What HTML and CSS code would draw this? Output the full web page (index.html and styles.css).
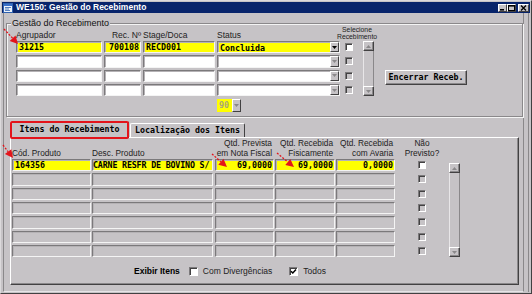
FILE: index.html
```html
<!DOCTYPE html>
<html lang="pt">
<head>
<meta charset="utf-8">
<title>WE150: Gestão do Recebimento</title>
<link rel="stylesheet" href="styles.css">
</head>
<body>
<div class="win">
  <div class="titlebar">
    <svg class="ticon" width="10" height="10" viewBox="0 0 10 10">
      <rect x="0.5" y="0.5" width="9" height="9" fill="#eef3fb" stroke="#2f62b0"/>
      <rect x="1" y="1" width="8" height="2" fill="#3a70c8"/>
      <path d="M2 4.5h6M2 6h4M2 7.5h5" stroke="#2f62b0" stroke-width="0.8"/>
    </svg>
    <span class="ttext">WE150: Gestão do Recebimento</span>
    <span class="tbtns">
      <span class="tbtn"><svg width="7" height="6" viewBox="0 0 7 6"><rect x="1" y="4" width="4" height="1.6" fill="#000"/></svg></span>
      <span class="tbtn"><svg width="7" height="6" viewBox="0 0 7 6"><rect x="0.5" y="0.5" width="6" height="5" fill="none" stroke="#000"/><rect x="0" y="0" width="7" height="1.6" fill="#000"/></svg></span>
      <span class="tbtn close"><svg width="7" height="6" viewBox="0 0 7 6"><path d="M1 0.5L6 5.5M6 0.5L1 5.5" stroke="#000" stroke-width="1.4"/></svg></span>
    </span>
  </div>
  <div class="client">
    <div class="canvas">
      <div class="group">
        <span class="legend">Gestão do Recebimento</span>
        <div class="ggrid">
          <span class="lb c1 r0">Agrupador</span>
          <span class="lb c2 r0 rt w37">Rec. Nº</span>
          <span class="lb c3 r0">Stage/Doca</span>
          <span class="lb c4 r0">Status</span>
          <span class="lb sm sel r0">Selecione<br>Recebimento</span>

          <div class="f y c1 r1 w86">31215</div>
          <div class="f y c2 r1 w37 rt">700108</div>
          <div class="f y c3 r1 w72">RECD001</div>
          <div class="f y c4 r1 w123 cmb"><span class="tx">Concluida</span><span class="dd"><svg width="5" height="3" viewBox="0 0 5 3"><path d="M0 0h5L2.5 3z" fill="#000"/></svg></span></div>
          <span class="cb c5 r1 on"></span>

          <div class="f c1 r2 w86"></div>
          <div class="f c2 r2 w37"></div>
          <div class="f c3 r2 w72"></div>
          <div class="f c4 r2 w123 cmb"><span class="tx"></span><span class="dd"><svg width="5" height="3" viewBox="0 0 5 3"><path d="M0 0h5L2.5 3z" fill="#8a888a"/></svg></span></div>
          <span class="cb c5 r2"></span>

          <div class="f c1 r3 w86"></div>
          <div class="f c2 r3 w37"></div>
          <div class="f c3 r3 w72"></div>
          <div class="f c4 r3 w123 cmb"><span class="tx"></span><span class="dd"><svg width="5" height="3" viewBox="0 0 5 3"><path d="M0 0h5L2.5 3z" fill="#8a888a"/></svg></span></div>
          <span class="cb c5 r3"></span>

          <div class="f c1 r4 w86"></div>
          <div class="f c2 r4 w37"></div>
          <div class="f c3 r4 w72"></div>
          <div class="f c4 r4 w123 cmb"><span class="tx"></span><span class="dd"><svg width="5" height="3" viewBox="0 0 5 3"><path d="M0 0h5L2.5 3z" fill="#8a888a"/></svg></span></div>
          <span class="cb c5 r4"></span>

          <div class="sb sbu">
            <span class="sbb"><svg width="5" height="3" viewBox="0 0 5 3"><path d="M0 3h5L2.5 0z" fill="#8a888a"/></svg></span>
            <span class="sbt"></span>
            <span class="sbb"><svg width="5" height="3" viewBox="0 0 5 3"><path d="M0 0h5L2.5 3z" fill="#8a888a"/></svg></span>
          </div>

          <button class="btn" type="button">Encerrar Receb.</button>

          <div class="combo90"><span class="v">90</span><span class="dd dis"><svg width="5" height="3" viewBox="0 0 5 3"><path d="M0 0h5L2.5 3z" fill="#8a888a"/></svg></span></div>
        </div>
      </div>

      <div class="tabctl">
        <div class="tabstrip">
          <div class="tab act">Itens do Recebimento</div>
          <div class="tab">Localização dos Itens</div>
        </div>
        <div class="panel">
          <div class="lgrid">
            <span class="lh k1">Cód. Produto</span>
            <span class="lh k2">Desc. Produto</span>
            <span class="lh k3 rt">Qtd. Prevista<br>em Nota Fiscal</span>
            <span class="lh k4 rt">Qtd. Recebida<br>Fisicamente</span>
            <span class="lh k5 rt">Qtd. Recebida<br>com Avaria</span>
            <span class="lh k6 ct">Não<br>Previsto?</span>

            <div class="f y k1 w79">164356</div>
            <div class="f y k2 w121 tight">CARNE RESFR DE BOVINO S/</div>
            <div class="f y k3 w59 rt">69,0000</div>
            <div class="f y k4 w60 rt">69,0000</div>
            <div class="f y k5 w59 rt">0,0000</div>
            <span class="cb k6 on mid"></span>

            <div class="f g k1 w79"></div><div class="f g k2 w121"></div><div class="f g k3 w59"></div><div class="f g k4 w60"></div><div class="f g k5 w59"></div><span class="cb k6 mid"></span>
            <div class="f g k1 w79"></div><div class="f g k2 w121"></div><div class="f g k3 w59"></div><div class="f g k4 w60"></div><div class="f g k5 w59"></div><span class="cb k6 mid"></span>
            <div class="f g k1 w79"></div><div class="f g k2 w121"></div><div class="f g k3 w59"></div><div class="f g k4 w60"></div><div class="f g k5 w59"></div><span class="cb k6 mid"></span>
            <div class="f g k1 w79"></div><div class="f g k2 w121"></div><div class="f g k3 w59"></div><div class="f g k4 w60"></div><div class="f g k5 w59"></div><span class="cb k6 mid"></span>
            <div class="f g k1 w79"></div><div class="f g k2 w121"></div><div class="f g k3 w59"></div><div class="f g k4 w60"></div><div class="f g k5 w59"></div><span class="cb k6 mid"></span>
            <div class="f g k1 w79"></div><div class="f g k2 w121"></div><div class="f g k3 w59"></div><div class="f g k4 w60"></div><div class="f g k5 w59"></div><span class="cb k6 mid"></span>

            <div class="sb sbl">
              <span class="sbb"><svg width="5" height="3" viewBox="0 0 5 3"><path d="M0 3h5L2.5 0z" fill="#8a888a"/></svg></span>
              <span class="sbt"></span>
              <span class="sbb"><svg width="5" height="3" viewBox="0 0 5 3"><path d="M0 0h5L2.5 3z" fill="#8a888a"/></svg></span>
            </div>
          </div>
          <div class="filter">
            <span class="fl">Exibir Itens</span>
            <span class="cb9"></span>
            <span class="ft">Com Divergências</span>
            <span class="cb9 chk"><svg width="7" height="7" viewBox="0 0 7 7"><path d="M1 3.2L2.8 5 6 1.5" fill="none" stroke="#000" stroke-width="1.5"/></svg></span>
            <span class="ft">Todos</span>
          </div>
        </div>
      </div>
    </div>
    <div class="rstrip"></div>
  </div>
</div>

<div class="hl"></div>
<svg class="annot" width="532" height="294" viewBox="0 0 532 294">
  <g stroke="#e3141b" stroke-width="1.3" stroke-dasharray="2 1.5" fill="none">
    <path d="M4 29L12.6 38.2"/>
    <path d="M3 145L8.1 151.7"/>
    <path d="M212 154L220.9 161.8"/>
    <path d="M277 153L287.8 162"/>
  </g>
  <g fill="#e3141b">
    <path d="M18 44L9.7 40.9L15.5 35.5z"/>
    <path d="M13 158L4.9 154.1L11.3 149.3z"/>
    <path d="M227 167L218.3 164.8L223.5 158.8z"/>
    <path d="M294 167L285.3 165.1L290.3 158.9z"/>
  </g>
</svg>
</body>
</html>
```

FILE: styles.css
```css
* { box-sizing: border-box; margin: 0; padding: 0; }
html, body { width: 532px; height: 294px; overflow: hidden; background: #c6c3c6; }
body { font-family: "Liberation Sans", Arial, sans-serif; font-size: 8.5px; color: #1c1c1c; }

.win {
  width: 532px; height: 294px; background: #c6c3c6;
  border: 1px solid; border-color: #dcdadc #424142 #424142 #dcdadc;
  padding: 1px;
  display: flex; flex-direction: column;
}

/* title bar */
.titlebar {
  height: 11px; background: #08246b; color: #fff;
  display: flex; align-items: center; padding: 0 1px 0 1px;
}
.ticon { flex: none; }
.ttext { margin-left: 3px; font: bold 8.5px/11px "Liberation Sans", Arial, sans-serif; white-space: nowrap; }
.tbtns { margin-left: auto; display: flex; }
.tbtn {
  width: 9px; height: 8px; background: #c6c3c6;
  border: 1px solid; border-color: #fff #424142 #424142 #fff;
  display: flex; align-items: center; justify-content: center;
}
.tbtn svg { display: block; }
.tbtn.close { width: 11px; margin-left: 2px; }

/* client */
.client { flex: 1; display: flex; padding-left: 1px; }
.canvas {
  width: 521px; border-left: 1px solid #8a888a; border-right: 1px solid #8a888a;
  border-bottom: 1px solid #e6e4e6;
  padding: 10px 0 0 2px;
}
.rstrip { width: 5px; border-right: 1px solid #8a888a; }

/* group box */
.group {
  width: 517px; height: 94px;
  border: 1px solid #8a888a;
  box-shadow: inset 1px 1px 0 #f4f4f4, 1px 1px 0 #f4f4f4;
  padding-left: 9px;
}
.legend {
  display: table; margin: -6px 0 0 -5px; padding: 0 1px;
  background: #c6c3c6; color: #111;
  font-size: 9px; line-height: 10px; height: 10px;
}
.ggrid {
  margin-top: -1px;
  display: grid;
  grid-template-columns: 88px 39px 74px 128px 18px 22px 82px;
  grid-template-rows: 12px 12.33px 12.33px 12.33px 12.33px 13px;
  row-gap: 2px;
}
.c1 { grid-column: 1; } .c2 { grid-column: 2; } .c3 { grid-column: 3; } .c4 { grid-column: 4; } .c5 { grid-column: 5; }
.r0 { grid-row: 1; } .r1 { grid-row: 2; } .r2 { grid-row: 3; } .r3 { grid-row: 4; } .r4 { grid-row: 5; }
.w86 { width: 86px; } .w37 { width: 37px; } .w72 { width: 72px; } .w123 { width: 123px; }
.w79 { width: 79px; } .w121 { width: 121px; } .w59 { width: 59px; } .w60 { width: 60px; }

.lb { align-self: end; margin-bottom: -1px; line-height: 9px; white-space: nowrap; color: #222; }
.rt { text-align: right; justify-content: flex-end; }
.ct { text-align: center; }
.sm { font-size: 6.8px; line-height: 7px; }
.sel { grid-column: 5 / span 2; justify-self: start; width: 40px; margin-left: -8px; text-align: center; }

/* fields */
.f {
  height: 100%;
  border: 1px solid; border-color: #7b797b #f4f4f4 #f4f4f4 #7b797b;
  box-shadow: inset 1px 1px 0 #b5b2b5;
  background: #fff;
  font: bold 8.3px/10px "DejaVu Sans Mono", "Liberation Mono", monospace; color: #000;
  padding: 0 1px 0 2px; white-space: nowrap; overflow: hidden;
  display: flex; align-items: center;
}
.f.tight { padding: 0; letter-spacing: -0.15px; }
.f.y { background: #ffff00; }
.f.g { background: #c6c3c6; }
.cmb { padding-right: 0; }
.cmb .tx { flex: 1; padding-top: 1px; }
.dd {
  width: 9px; align-self: stretch;
  background: #c6c3c6; border: 1px solid; border-color: #fff #424142 #424142 #fff;
  display: flex; align-items: center; justify-content: center;
}
.dd svg { display: block; }

.cb {
  width: 8px; height: 8px; align-self: center; justify-self: start;
  border: 1px solid; border-color: #7b797b #fff #fff #7b797b;
  box-shadow: inset 1px 1px 0 #424142;
  background: #c6c3c6;
}
.cb.on { background: #fff; }
.cb.mid { justify-self: center; }

.sb { display: flex; flex-direction: column; width: 11px; }
.sbu { grid-column: 6; grid-row: 2 / span 4; }
.sbb {
  height: 10px; flex: none; background: #c6c3c6;
  border: 1px solid; border-color: #fff #424142 #424142 #fff;
  box-shadow: inset -1px -1px 0 #8a888a;
  display: flex; align-items: center; justify-content: center;
}
.sbb svg { display: block; }
.sbt { flex: 1; border-left: 1px solid #e8e6e8; border-right: 1px solid #8a888a; }

.btn {
  grid-column: 7; grid-row: 4 / span 2; align-self: start;
  width: 82px; height: 15px;
  background: #c6c3c6; color: #000;
  border: 1px solid; border-color: #fff #424142 #424142 #fff;
  box-shadow: inset -1px -1px 0 #8a888a;
  font: bold 8.3px/13px "DejaVu Sans Mono", "Liberation Mono", monospace;
  text-align: center;
}

.combo90 { grid-column: 4; grid-row: 6; display: flex; width: 24px; height: 13px; margin-top: 1px; }
.combo90 .v {
  width: 15px; background: #ffff00; color: #a8a67a;
  font: bold 8.3px/13px "DejaVu Sans Mono", "Liberation Mono", monospace; padding-left: 2px;
}
.combo90 .dd { width: 9px; }

/* tabs */
.tabctl { width: 509px; margin: 4px 0 0 4px; }
.tabstrip { height: 16px; display: flex; align-items: flex-end; position: relative; z-index: 1; }
.tab {
  height: 14px; width: 115px; margin-left: 1px;
  border: 1px solid; border-bottom: 0; border-color: #fff #424142 #424142 #fff;
  border-radius: 2px 2px 0 0;
  font: bold 8.3px/13px "DejaVu Sans Mono", "Liberation Mono", monospace; color: #000;
  text-align: center; white-space: nowrap;
  background: #c6c3c6;
}
.tab.act { width: 119px; height: 17px; margin-left: 0; margin-bottom: -1px; line-height: 14px; }
.panel {
  height: 148px;
  border: 1px solid; border-color: #fff #424142 #424142 #fff;
  box-shadow: inset -1px -1px 0 #8a888a;
  padding: 1px 0 0 1px;
}
.lgrid {
  display: grid;
  grid-template-columns: 80px 123px 60px 61px 59px 54px 11px;
  grid-template-rows: 18px repeat(7, 12.33px);
  row-gap: 2px;
}
.k1 { grid-column: 1; } .k2 { grid-column: 2; } .k3 { grid-column: 3; } .k4 { grid-column: 4; } .k5 { grid-column: 5; } .k6 { grid-column: 6; }
.lh { grid-row: 1; align-self: end; margin-bottom: -1px; font-size: 8.3px; line-height: 9.5px; white-space: nowrap; color: #222; }
.lh.k3, .lh.k4, .lh.k5 { padding-right: 2px; }
.lh.k3 { width: 59px; } .lh.k4 { width: 60px; } .lh.k5 { width: 59px; }
.lh.k6 { justify-self: center; }
.sbl { grid-column: 7; grid-row: 2 / span 7; margin-top: 4px; }

.filter { display: flex; align-items: center; height: 12px; margin-top: 8px; padding-left: 122px; }
.fl { font-weight: bold; color: #000; font-size: 8.5px; }
.ft { color: #222; font-size: 8.5px; margin-left: 5px; }
.cb9 {
  width: 9px; height: 9px; margin-left: 9px;
  border: 1px solid; border-color: #7b797b #fff #fff #7b797b;
  box-shadow: inset 1px 1px 0 #424142;
  background: #fff;
  display: flex; align-items: center; justify-content: center;
}
.cb9.chk { margin-left: 17px; }
.cb9 svg { display: block; }

/* annotations drawn over the screenshot */
.hl {
  position: absolute; left: 10px; top: 121px; width: 119px; height: 18px; z-index: 5;
  border: 2px solid #e3141b; border-radius: 2px;
}
.annot { position: absolute; left: 0; top: 0; pointer-events: none; z-index: 6; }
```
